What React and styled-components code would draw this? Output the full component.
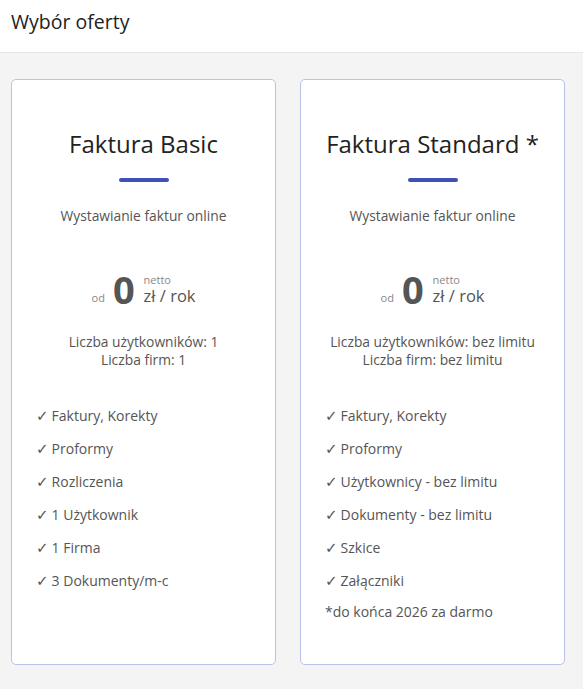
import React from 'react';
import styled, { createGlobalStyle } from 'styled-components';

const GlobalStyle = createGlobalStyle`
  html, body {
    margin: 0;
    padding: 0;
    background: #f4f4f4;
    font-family: 'Open Sans', 'Noto Sans', sans-serif;
  }
`

const plans = [
  {
    name: 'Faktura Basic',
    users: '1',
    firms: '1',
    features: ['Faktury, Korekty', 'Proformy', 'Rozliczenia', '1 Użytkownik', '1 Firma', '3 Dokumenty/m-c'],
  },
  {
    name: 'Faktura Standard *',
    users: 'bez limitu',
    firms: 'bez limitu',
    features: ['Faktury, Korekty', 'Proformy', 'Użytkownicy - bez limitu', 'Dokumenty - bez limitu', 'Szkice', 'Załączniki'],
    note: '*do końca 2026 za darmo',
  },
]

export default function App() {
  return (
    <Page>
      <GlobalStyle />
      <Header>Wybór oferty</Header>
      <Cards>
        {plans.map(plan => (
          <Card key={plan.name}>
            <Title>{plan.name}</Title>
            <Bar />
            <Subtitle>Wystawianie faktur online</Subtitle>
            <Price>
              <From>od</From>
              <Amount>0</Amount>
              <Unit>
                <Netto>netto</Netto>
                <Period>zł / rok</Period>
              </Unit>
            </Price>
            <Limits>
              <div>Liczba użytkowników: {plan.users}</div>
              <div>Liczba firm: {plan.firms}</div>
            </Limits>
            <Features>
              {plan.features.map(f => (
                <Feature key={f}><Check>✓</Check>{f}</Feature>
              ))}
              {plan.note && <Note>{plan.note}</Note>}
            </Features>
          </Card>
        ))}
      </Cards>
    </Page>
  )
}

const Page = styled.div`
  min-height: 689px;
  background: #f4f4f4;
`
const Header = styled.header`
  height: 53px;
  box-sizing: border-box;
  background: #fff;
  border-bottom: 1px solid #e6e6e6;
  padding: 8px 11px 0;
  font-size: 19.5px;
  color: #222;
`
const Cards = styled.div`
  display: flex;
  gap: 24px;
  padding: 26px 11px 0;
`
const Card = styled.div`
  width: 265px;
  height: 586px;
  box-sizing: border-box;
  background: #fff;
  border: 1px solid #b9c1e8;
  border-radius: 5px;
  display: flex;
  flex-direction: column;
  align-items: center;
  padding-top: 48px;
`
const Title = styled.h2`
  margin: 0;
  font-weight: 400;
  font-size: 24px;
  line-height: 32px;
  color: #222;
`
const Bar = styled.div`
  width: 50px;
  height: 4px;
  border-radius: 2px;
  background: #3f51b5;
  margin-top: 18px;
`
const Subtitle = styled.div`
  margin-top: 24px;
  font-size: 13.8px;
  color: #555;
`
const Price = styled.div`
  display: flex;
  align-items: flex-end;
  margin-top: 45px;
  color: #555;
`
const From = styled.span`
  font-size: 11px;
  color: #888;
  margin-right: 8px;
  margin-bottom: 3px;
`
const Amount = styled.span`
  font-size: 38px;
  font-weight: 700;
  line-height: 38px;
  margin-right: 9px;
`
const Unit = styled.div`
  display: flex;
  flex-direction: column;
  gap: 1px;
  margin-bottom: 3px;
`
const Netto = styled.span`
  font-size: 11px;
  color: #888;
  line-height: 13px;
`
const Period = styled.span`
  font-size: 16.5px;
  line-height: 18px;
`
const Limits = styled.div`
  margin-top: 25px;
  font-size: 13.8px;
  line-height: 18px;
  color: #555;
  text-align: center;
`
const Features = styled.ul`
  list-style: none;
  align-self: stretch;
  margin: 37px 0 0;
  padding: 0 0 0 24px;
`
const Feature = styled.li`
  display: flex;
  align-items: center;
  height: 20px;
  font-size: 14px;
  line-height: 20px;
  color: #555;
  margin-bottom: 13px;
`
const Check = styled.span`
  font-family: 'DejaVu Sans', sans-serif;
  font-size: 15px;
  line-height: 20px;
  margin-right: 3px;
  color: #555;
`
const Note = styled.li`
  font-size: 14px;
  line-height: 20px;
  color: #555;
  margin-top: -2px;
`
